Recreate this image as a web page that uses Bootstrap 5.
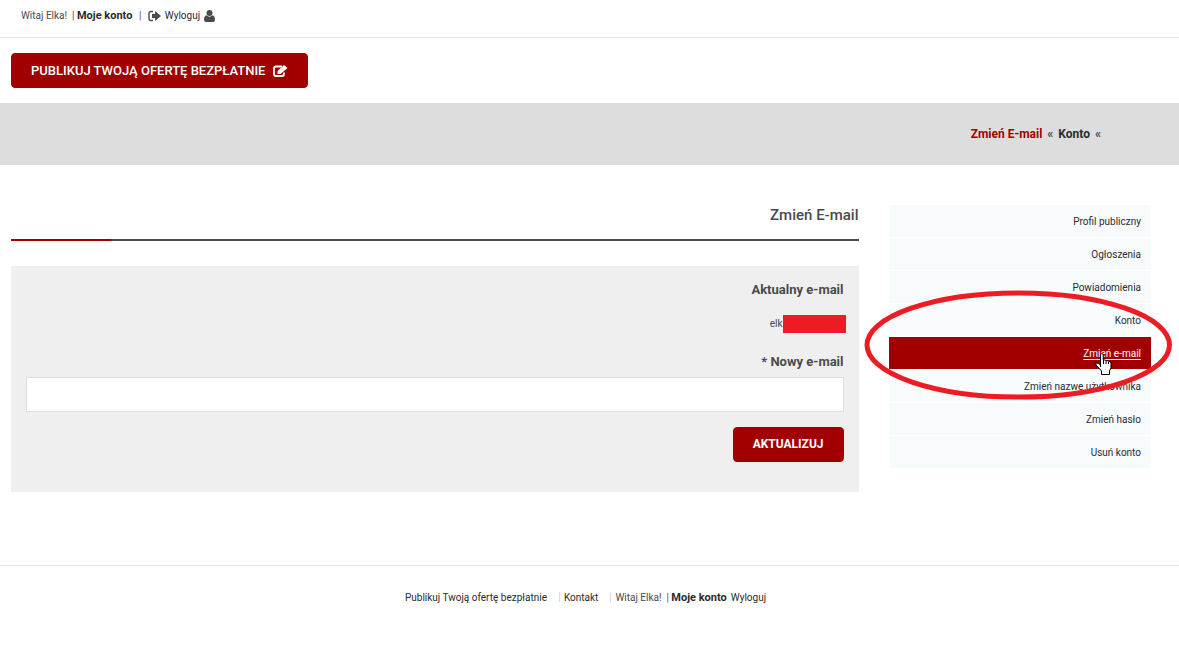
<!DOCTYPE html>
<html lang="pl">
<head>
<meta charset="utf-8">
<meta name="viewport" content="width=device-width, initial-scale=1">
<title>Zmień E-mail</title>
<link rel="stylesheet" href="https://cdn.jsdelivr.net/npm/bootstrap@5.3.0/dist/css/bootstrap.min.css">
<style>
  :root { --brand: #a20000; --ink: #4a4a4c; --dark: #2b2b2b; --mark: #ed1c24; }
  body { font: 10px/20px Roboto, "Liberation Sans", sans-serif; color: var(--ink); background: #fff; }
  a { color: var(--dark); text-decoration: none; }
  a:hover { color: var(--brand); }
  .page-wrap { padding-left: 11px; padding-right: 28px; }
  .topbar { height: 38px; padding: 0 21px 6px; border-bottom: 1px solid #e5e5e5; }
  .strong-link { font-size: 11px; font-weight: 700; }
  .publish { padding-top: 15px; padding-bottom: 15px; }
  .btn-brand { --bs-btn-color: #fff; --bs-btn-bg: var(--brand); --bs-btn-border-color: var(--brand);
    --bs-btn-hover-color: #fff; --bs-btn-hover-bg: #860000; --bs-btn-hover-border-color: #860000;
    --bs-btn-border-radius: 4px; --bs-btn-padding-x: 19px; --bs-btn-padding-y: 6px;
    --bs-btn-font-size: 13px; --bs-btn-line-height: 21px; --bs-btn-font-weight: 500; display: inline-flex; align-items: center; }
  .btn-update { --bs-btn-font-size: 12px; --bs-btn-font-weight: 700; margin-top: 15px; }
  .band { background: #ddd; height: 62px; padding-right: 78px; }
  .crumbs { font-size: 12px; font-weight: 700; gap: 5px; }
  .crumbs li.active { color: var(--brand); }
  .content-area { padding-top: 40px; padding-bottom: 73px; }
  .cols { --bs-gutter-x: 30px; }
  .page-title { font-size: 15px; line-height: 20px; font-weight: 500; padding-bottom: 14px; margin-bottom: 25px;
    border-bottom: 2px solid #4d4d4f; position: relative; }
  .page-title::after { content: ""; position: absolute; left: 0; bottom: -2px; width: 100px; height: 2px; background: var(--brand); }
  .panel { background: #efefef; padding: 14px 15px 30px; }
  .label-text { font-size: 13px; font-weight: 700; line-height: 20px; margin-bottom: 5px; }
  .current-mail { padding: 9px 0 18px; }
  .redacted { background: var(--mark); width: 63px; height: 18px; margin-right: -2px; }
  .mail-input { height: 35px; border-radius: 0; border-color: #ddd; font-size: 12px; }
  .side-menu a { background: #f7fbfc; height: 32px; padding: 7px 10px 5px; margin-bottom: 1px; }
  .side-menu a.current { background: var(--brand); color: #fff; text-decoration: underline; text-underline-offset: 2px; }
  .ring { position: absolute; left: -25px; top: 85px; width: calc(100% + 46px); height: 110px; pointer-events: none; }
  .pointer { position: absolute; right: 39px; top: 148px; pointer-events: none; }
  .site-footer { border-top: 1px solid #e5e5e5; padding: 22px 8px 43px 0; }
  .split { width: 1px; height: 10px; background: #ddd; margin: 4px 4px 0 12px; }
</style>
</head>
<body>
<header>
  <div class="topbar d-flex align-items-center">
    <span>Witaj Elka! &nbsp;|&nbsp;</span><a class="strong-link" href="#">Moje konto</a><span class="ms-1">&nbsp;|&nbsp;</span>
    <svg class="ms-1" width="13" height="12" viewBox="0 0 13 12" aria-hidden="true"><path d="M5 1.500H3Q1 1.500 1 3.500v5q0 2 2 2h2" fill="none" stroke="#4a4a4c" stroke-width="1.400"/><path d="M4 4h3V1l6 5-6 5V8H4z" fill="#4a4a4c"/></svg>
    <a class="ms-1" href="#">Wyloguj</a>
    <svg class="ms-1" width="11" height="12" viewBox="0 0 11 12" aria-hidden="true"><circle cx="5.500" cy="3" r="3" fill="#4a4a4c"/><path d="M2.500 5.300Q5.500 8 8.500 5.300 11 6 11 10q0 2-2 2H2q-2 0-2-2 0-4 2.500-4.700z" fill="#4a4a4c"/></svg>
  </div>
  <div class="page-wrap publish d-flex">
    <button class="btn btn-brand" type="button">PUBLIKUJ TWOJĄ OFERTĘ BEZPŁATNIE
      <svg class="ms-2" width="15" height="12" viewBox="0 0 15 12" aria-hidden="true"><path d="M9 1.500H3Q1 1.500 1 3.500V9q0 2 2 2h6q2 0 2-2V7.500" fill="none" stroke="#fff" stroke-width="1.800"/><path d="M4.500 9V6L11 0l3.500 3L7.600 9z" fill="#fff"/></svg>
    </button>
  </div>
  <nav class="band d-flex align-items-center justify-content-end" aria-label="Ścieżka">
    <ol class="crumbs list-unstyled d-flex mb-0">
      <li class="active">Zmień E-mail</li>
      <li>«</li>
      <li><a href="#">Konto</a></li>
      <li>«</li>
    </ol>
  </nav>
</header>
<main class="page-wrap content-area">
  <div class="row cols">
    <section class="col-9">
      <h1 class="page-title text-end">Zmień E-mail</h1>
      <form class="panel text-end">
        <div class="label-text">Aktualny e-mail</div>
        <div class="current-mail d-flex justify-content-end align-items-center">elk<span class="redacted"></span></div>
        <label class="label-text d-block" for="mail">* Nowy e-mail</label>
        <input class="form-control mail-input" id="mail" type="email">
        <div class="d-flex justify-content-end"><button class="btn btn-brand btn-update" type="button">AKTUALIZUJ</button></div>
      </form>
    </section>
    <aside class="col-3">
      <nav class="side-menu position-relative d-flex flex-column text-end" aria-label="Konto">
        <a href="#">Profil publiczny</a>
        <a href="#">Ogłoszenia</a>
        <a href="#">Powiadomienia</a>
        <a href="#">Konto</a>
        <a class="current" href="#" aria-current="page">Zmień e-mail</a>
        <a href="#">Zmień nazwę użytkownika</a>
        <a href="#">Zmień hasło</a>
        <a href="#">Usuń konto</a>
        <svg class="ring" viewBox="0 0 308 110" preserveAspectRatio="none" aria-hidden="true"><ellipse cx="154" cy="55" rx="151" ry="52" fill="none" stroke="#ed1c24" stroke-width="5"/></svg>
        <svg class="pointer" width="17" height="22" viewBox="0 0 17 22" aria-hidden="true"><path d="M5.500 14V2q0-1.500 1.300-1.500T8.200 2v5q2.500-.5 2.800.7 2.200-.4 2.600.8 2.400-.2 2.400 1.500v5l-1.500 3v3.500H6.500V18L1 12q-.7-1.500.7-1.900T5.500 12z" fill="#fff" stroke="#000"/><path d="M8.500 7v4M11 8v3M13.500 9v2" stroke="#000"/></svg>
      </nav>
    </aside>
  </div>
</main>
<footer class="site-footer d-flex justify-content-center">
  <a href="#">Publikuj Twoją ofertę bezpłatnie</a>
  <span class="split"></span>
  <a href="#">Kontakt</a>
  <span class="split"></span>
  <span>Witaj Elka! &nbsp;|&nbsp;</span><a class="strong-link" href="#">Moje konto</a><a class="ms-1" href="#">Wyloguj</a>
</footer>
<script src="https://cdn.jsdelivr.net/npm/bootstrap@5.3.0/dist/js/bootstrap.bundle.min.js"></script>
</body>
</html>
